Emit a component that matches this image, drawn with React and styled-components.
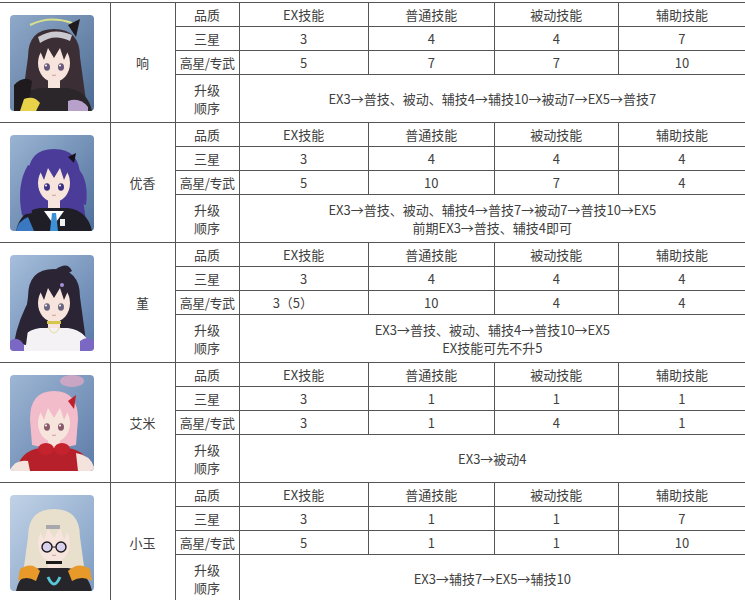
import styled, { createGlobalStyle } from "styled-components";
import { useId } from "react";

const GlobalStyle = createGlobalStyle`
  html, body {
    margin: 0;
    padding: 0;
    background: #ffffff;
  }
  body {
    font-family: "Noto Sans CJK SC", "Noto Sans", sans-serif;
    color: #404040;
  }
`;

const characters = [
  {
    name: "响",
    star3: ["3", "4", "4", "7"],
    high: ["5", "7", "7", "10"],
    order: ["EX3→普技、被动、辅技4→辅技10→被动7→EX5→普技7"],
    look: "hibiki",
  },
  {
    name: "优香",
    star3: ["3", "4", "4", "4"],
    high: ["5", "10", "7", "4"],
    order: ["EX3→普技、被动、辅技4→普技7→被动7→普技10→EX5", "前期EX3→普技、辅技4即可"],
    look: "yuuka",
  },
  {
    name: "堇",
    star3: ["3", "4", "4", "4"],
    high: ["3（5）", "10", "4", "4"],
    order: ["EX3→普技、被动、辅技4→普技10→EX5", "EX技能可先不升5"],
    look: "sumire",
  },
  {
    name: "艾米",
    star3: ["3", "1", "1", "1"],
    high: ["3", "1", "4", "1"],
    order: ["EX3→被动4"],
    look: "eimi",
  },
  {
    name: "小玉",
    star3: ["3", "1", "1", "7"],
    high: ["5", "1", "1", "10"],
    order: ["EX3→辅技7→EX5→辅技10"],
    look: "kotama",
  },
];

const headers = ["EX技能", "普通技能", "被动技能", "辅助技能"];

const looks = {
  hibiki: { bg1: "#8fa9c9", bg2: "#4d6b93", hair: "#3b2f35", eye: "#6a5a7a", outfit: "#2a2629" },
  yuuka: { bg1: "#9ab4d2", bg2: "#4f6f9c", hair: "#4a3c98", eye: "#3c2f86", outfit: "#1f1d25" },
  sumire: { bg1: "#a7bfdc", bg2: "#5878a6", hair: "#2a2434", eye: "#6b6580", outfit: "#f4f2f4" },
  eimi: { bg1: "#9eb6d4", bg2: "#5d7ca8", hair: "#f2bccb", eye: "#8a5a6a", outfit: "#b5202a" },
  kotama: { bg1: "#c1d2e6", bg2: "#7d9cc3", hair: "#e9dfcd", eye: "#7a6a80", outfit: "#26262a" },
};

function Extras({ look }) {
  if (look === "hibiki") {
    return (
      <>
        <path d="M20 10 Q40 0 62 8" stroke="#d8e08a" strokeWidth="2" fill="none" />
        <path d="M28 22 Q44 12 62 20 L60 26 Q44 18 30 28 Z" fill="#c9c9cf" />
        <path d="M58 10 L70 4 L66 22 Z" fill="#1e1a1e" />
        <path d="M4 70 Q14 60 22 66 L18 96 L4 96 Z" fill="#1e1a1e" />
        <path d="M14 84 Q24 80 30 88 L26 96 L10 96 Z" fill="#e7d24a" />
        <path d="M58 86 Q70 82 78 92 L78 96 L58 96 Z" fill="#b7a0c9" />
      </>
    );
  }
  if (look === "yuuka") {
    return (
      <>
        <path d="M18 30 Q6 50 12 80 L22 78 Q18 54 26 34 Z" fill="#4a3c98" />
        <path d="M62 28 Q80 40 76 70 L66 66 Q70 46 58 34 Z" fill="#4a3c98" />
        <path d="M58 22 L66 18 L64 28 Z" fill="#15121c" />
        <path d="M34 76 L44 90 L54 76 Z" fill="#ffffff" />
        <path d="M42 78 L46 78 L48 96 L40 96 Z" fill="#3d8fd6" />
        <path d="M6 96 Q8 86 18 82 L24 96 Z" fill="#3a78c2" />
        <rect x="50" y="84" width="5" height="7" fill="#f1f1f1" />
      </>
    );
  }
  if (look === "sumire") {
    return (
      <>
        <path d="M46 14 Q58 6 62 16 L52 22 Z" fill="#2a2434" />
        <path d="M22 40 Q8 64 4 88 L16 90 Q18 66 28 48 Z" fill="#2a2434" />
        <rect x="37" y="66" width="14" height="3" fill="#d6c64a" />
        <path d="M38 72 Q44 84 50 72" stroke="#e3dc9a" strokeWidth="1" fill="none" />
        <path d="M0 86 Q8 80 14 90 L14 96 L0 96 Z" fill="#7b68c4" />
        <path d="M70 86 Q78 80 84 86 L84 96 L70 96 Z" fill="#7b68c4" />
        <circle cx="52" cy="30" r="2" fill="#a890d8" />
      </>
    );
  }
  if (look === "eimi") {
    return (
      <>
        <ellipse cx="62" cy="6" rx="12" ry="6" fill="#e8aac6" opacity="0.7" />
        <path d="M58 26 L66 20 L64 34 Z" fill="#c0202c" />
        <ellipse cx="36" cy="74" rx="8" ry="6" fill="#c4232e" />
        <ellipse cx="52" cy="74" rx="8" ry="6" fill="#c4232e" />
        <path d="M0 96 Q4 84 18 86 L20 96 Z" fill="#f4e2dc" />
        <path d="M66 78 Q80 80 84 92 L84 96 L68 96 Z" fill="#f4e2dc" />
      </>
    );
  }
  return (
    <>
      <rect x="36" y="30" width="14" height="4" fill="#a7a7ad" />
      <circle cx="37" cy="52" r="5" fill="#d9d0ee" stroke="#1a1a1a" strokeWidth="1.4" />
      <circle cx="51" cy="52" r="5" fill="#d9d0ee" stroke="#1a1a1a" strokeWidth="1.4" />
      <line x1="42" y1="52" x2="46" y2="52" stroke="#1a1a1a" strokeWidth="1.2" />
      <path d="M10 74 Q22 66 30 76 L26 86 Q16 80 8 86 Z" fill="#e79a2a" />
      <path d="M58 76 Q68 66 80 74 L82 86 Q72 80 62 86 Z" fill="#e79a2a" />
      <path d="M38 82 Q44 96 50 82" stroke="#57c6d6" strokeWidth="3" fill="none" />
      <rect x="36" y="66" width="16" height="3" fill="#1a1a1a" />
    </>
  );
}

function Portrait({ look }) {
  const id = useId();
  const c = looks[look];
  const skin = "#f7e5dd";
  const shortHair = look === "eimi";
  return (
    <Frame>
      <svg viewBox="0 0 84 96" width="84" height="96">
        <defs>
          <linearGradient id={id} x1="0" y1="0" x2="1" y2="1">
            <stop offset="0" stopColor={c.bg1} />
            <stop offset="1" stopColor={c.bg2} />
          </linearGradient>
        </defs>
        <rect width="84" height="96" fill={`url(#${id})`} />
        <path
          d={
            shortHair
              ? "M20 44 Q20 16 44 16 Q68 16 68 44 L66 70 Q44 76 22 70 Z"
              : "M18 42 Q18 14 44 14 Q70 14 70 42 L76 86 Q60 92 44 90 Q28 92 12 86 Z"
          }
          fill={c.hair}
        />
        <rect x="38" y="62" width="12" height="14" fill={skin} />
        <path d="M6 96 Q10 76 30 73 L58 73 Q78 76 82 96 Z" fill={c.outfit} />
        <ellipse cx="44" cy="48" rx="16" ry="19" fill={skin} />
        <ellipse cx="37" cy="52" rx="3" ry="3.8" fill={c.eye} />
        <ellipse cx="51" cy="52" rx="3" ry="3.8" fill={c.eye} />
        <circle cx="36" cy="50.5" r="1" fill="#ffffff" />
        <circle cx="50" cy="50.5" r="1" fill="#ffffff" />
        <path d="M42 60 Q44 61 46 60" stroke="#c98a86" strokeWidth="0.8" fill="none" />
        <path
          d="M26 48 Q25 25 44 25 Q63 25 62 48 L58 36 L54 45 L50 33 L44 43 L38 33 L34 45 L30 36 Z"
          fill={c.hair}
        />
        <Extras look={look} />
      </svg>
    </Frame>
  );
}

export default function App() {
  return (
    <>
      <GlobalStyle />
      <Table>
        <colgroup>
          <col style={{ width: 110 }} />
          <col style={{ width: 65 }} />
          <col style={{ width: 64 }} />
          <col style={{ width: 129 }} />
          <col style={{ width: 126 }} />
          <col style={{ width: 124 }} />
          <col style={{ width: 127 }} />
        </colgroup>
        {characters.map((ch) => (
          <tbody key={ch.name}>
            <Row>
              <PortraitCell rowSpan={4}>
                <Portrait look={ch.look} />
              </PortraitCell>
              <Cell rowSpan={4}>{ch.name}</Cell>
              <Cell>品质</Cell>
              {headers.map((h) => (
                <Cell key={h}>{h}</Cell>
              ))}
            </Row>
            <Row>
              <Cell>三星</Cell>
              {ch.star3.map((v, k) => (
                <Cell key={k}>{v}</Cell>
              ))}
            </Row>
            <Row>
              <Cell $tight>高星/专武</Cell>
              {ch.high.map((v, k) => (
                <Cell key={k} $left={v.length > 2}>
                  {v}
                </Cell>
              ))}
            </Row>
            <OrderRow>
              <Cell>
                升级
                <br />
                顺序
              </Cell>
              <Cell colSpan={4}>
                {ch.order.map((line) => (
                  <div key={line}>{line}</div>
                ))}
              </Cell>
            </OrderRow>
          </tbody>
        ))}
      </Table>
    </>
  );
}

const Table = styled.table`
  width: 746px;
  table-layout: fixed;
  border-collapse: collapse;
  margin-top: 2px;
  font-size: 13px;
  line-height: 18px;
`;

const Row = styled.tr`
  height: 24px;
`;

const OrderRow = styled.tr`
  height: 48px;
`;

const Cell = styled.td`
  border: 1px solid #555555;
  padding: 0;
  text-align: ${(p) => (p.$left ? "left" : "center")};
  padding-left: ${(p) => (p.$left ? "33px" : "0")};
  vertical-align: middle;
  white-space: nowrap;
  letter-spacing: ${(p) => (p.$tight ? "-0.5px" : "0")};
`;

const PortraitCell = styled.td`
  border: 1px solid #555555;
  border-left: none;
  padding: 0;
  text-align: center;
  vertical-align: middle;
`;

const Frame = styled.div`
  width: 84px;
  height: 96px;
  margin: 0 auto;
  border-radius: 4px;
  overflow: hidden;
  line-height: 0;
  position: relative;
  left: -3px;
`;
